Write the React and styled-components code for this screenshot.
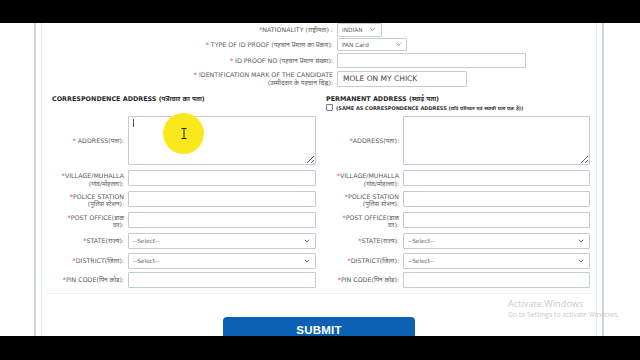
import React from 'react';
import styled, { createGlobalStyle } from 'styled-components';
import { ChevronDown } from 'lucide-react';

const Global = createGlobalStyle`
  html, body { margin: 0; padding: 0; background: #000; }
  #root { width: 640px; height: 360px; }
  * { box-sizing: border-box; }
`;

const FONT = `"DejaVu Sans", "Noto Sans", sans-serif`;

const Screen = styled.div`
  position: relative;
  width: 640px;
  height: 360px;
  display: flex;
  flex-direction: column;
  background: #000;
  overflow: hidden;
  font-family: ${FONT};
`;

const Letterbox = styled.div`
  flex: 0 0 ${(p) => p.$h}px;
  background: #000;
`;

const Viewport = styled.div`
  flex: 1;
  display: flex;
  background: #fff;
  padding-left: 34px;
  overflow: hidden;
`;

const Frame = styled.div`
  width: 570px;
  display: flex;
  padding: 0 5px;
  border-left: 2px solid #cdd6df;
  border-right: 2px solid #cdd6df;
`;

const Inner = styled.div`
  flex: 1;
  display: flex;
  flex-direction: column;
  border-left: 1px solid #e4e8ec;
  border-right: 1px solid #e4e8ec;
`;

const TopSection = styled.div`
  margin-top: -1px;
  display: flex;
  flex-direction: column;
`;

const TopRow = styled.div`
  height: ${(p) => p.$h}px;
  display: flex;
  align-items: center;
  gap: 4px;
`;

const TopLabelCell = styled.div`
  width: 291px;
  height: 100%;
  display: flex;
  justify-content: flex-end;
  align-items: center;
`;

const Label = styled.div`
  font-size: 6.3px;
  line-height: 7.5px;
  color: #5a5a5a;
  text-align: right;
  white-space: nowrap;
  align-self: ${(p) => (p.$top ? 'flex-start' : 'center')};
  padding-top: ${(p) => (p.$top ? 2 : 0)}px;
`;

const Star = styled.span`
  color: #e04848;
`;

const TextInput = styled.input`
  display: block;
  width: ${(p) => p.$w}px;
  height: ${(p) => p.$h || 15}px;
  border: 1px solid #c3ccd6;
  border-radius: 1px;
  background: #fff;
  padding: 0 5px;
  font-family: ${FONT};
  font-size: 7.5px;
  color: #444;
  outline: none;
`;

const SelectWrap = styled.div`
  position: relative;
  width: ${(p) => p.$w}px;
  height: ${(p) => p.$h || 15}px;
  color: #555;
  font-size: 0;
  line-height: 0;
  svg {
    position: absolute;
    right: ${(p) => p.$chev || 5}px;
    top: 0;
    bottom: 0;
    margin: auto 0;
    pointer-events: none;
  }
`;

const Select = styled.select`
  display: block;
  appearance: none;
  width: 100%;
  height: 100%;
  margin: 0;
  border: 1px solid #c3ccd6;
  border-radius: 1px;
  background: #fff;
  padding: 0 4px;
  font-family: ${FONT};
  font-size: 5.8px;
  color: #666;
  outline: none;
`;

const Columns = styled.div`
  margin-top: 2px;
  display: grid;
  grid-template-columns: 278px 276px;
`;

const Column = styled.div`
  display: flex;
  flex-direction: column;
`;

const ColHeader = styled.div`
  height: 26px;
  padding: 5px 0 0 ${(p) => p.$pad}px;
`;

const Title = styled.div`
  font-size: 6.4px;
  line-height: 8px;
  font-weight: bold;
  color: #2a2a2a;
  white-space: nowrap;
`;

const SameRow = styled.label`
  display: flex;
  align-items: center;
  gap: 3px;
  font-size: 5px;
  font-weight: bold;
  color: #333;
  white-space: nowrap;
  margin-top: 1px;
`;

const Box = styled.span`
  width: 7px;
  height: 7px;
  border: 1px solid #777;
  border-radius: 1px;
  background: #fff;
`;

const FieldList = styled.div`
  display: flex;
  flex-direction: column;
`;

const FieldRow = styled.div`
  display: grid;
  grid-template-columns: ${(p) => p.$label}px ${(p) => p.$field}px;
  column-gap: 4px;
  height: ${(p) => p.$h}px;
  margin-top: ${(p) => p.$mt}px;
`;

const AreaWrap = styled.div`
  position: relative;
`;

const Area = styled.textarea`
  display: block;
  width: 100%;
  height: 49px;
  margin: 0;
  border: 1px solid #c3ccd6;
  border-radius: 1px;
  resize: both;
  outline: none;
  background: #fff;
`;

const Caret = styled.span`
  position: absolute;
  left: 5px;
  top: 3px;
  width: 1px;
  height: 8px;
  background: #555;
`;

const Divider = styled.div`
  margin: 5px 3px 0;
  border-top: 1px solid #eef0f2;
`;

const SubmitBar = styled.div`
  display: flex;
  justify-content: center;
  margin-top: 23px;
`;

const SubmitButton = styled.button`
  width: 192px;
  height: 30px;
  border: none;
  border-radius: 4px 4px 0 0;
  background: #0d61b5;
  color: #fff;
  font-family: "Liberation Sans", Arial, sans-serif;
  font-weight: bold;
  font-size: 11.5px;
  padding: 0 0 4px;
  letter-spacing: 0.2px;
`;

const Highlight = styled.div`
  position: absolute;
  left: 163px;
  top: 113px;
  width: 41px;
  height: 41px;
  border-radius: 50%;
  background: radial-gradient(circle, #f8e81c 0%, #f8e81c 82%, rgba(248, 232, 28, 0.6) 92%, rgba(248, 232, 28, 0) 100%);
  display: flex;
  align-items: center;
  justify-content: center;
`;

const Watermark = styled.div`
  position: absolute;
  left: 508px;
  top: 298px;
  font-family: "Open Sans", "Noto Sans", sans-serif;
  color: #c9c9c9;
  pointer-events: none;
`;

const WmTitle = styled.div`
  font-size: 9.2px;
  line-height: 12px;
`;

const WmSub = styled.div`
  font-size: 6.8px;
  line-height: 9px;
`;

const leftRows = [
  { s: '* ', lines: ['ADDRESS(पता):'], type: 'area', mt: 0 },
  { s: '*', lines: ['VILLAGE/MUHALLA', '(गांव/मोहल्ला):'], mt: 5 },
  { s: '*', lines: ['POLICE STATION', '(पुलिस स्टेशन):'], mt: 5.4 },
  { s: '*', lines: ['POST OFFICE(डाक', 'घर):'], mt: 5.4 },
  { s: '*', lines: ['STATE(राज्य):'], type: 'select', mt: 5.4 },
  { s: '*', lines: ['DISTRICT(जिला):'], type: 'select', mt: 4.4 },
  { s: '*', lines: ['PIN CODE(पिन कोड):'], mt: 3.6 },
];

const rightRows = leftRows.map((r, i) => (i === 0 ? { ...r, s: '*' } : r));

function LabelText({ s, lines }) {
  return (
    <Label $top={lines.length > 1}>
      <Star>{s}</Star>
      {lines.map((l, i) => (
        <React.Fragment key={i}>
          {i > 0 && <br />}
          {l}
        </React.Fragment>
      ))}
    </Label>
  );
}

function AddressColumn({ pad, labelW, fieldW, rows, header, caret }) {
  return (
    <Column>
      <ColHeader $pad={pad}>{header}</ColHeader>
      <FieldList>
        {rows.map((r, i) => (
          <FieldRow
            key={i}
            $label={labelW}
            $field={fieldW}
            $h={r.type === 'area' ? 49 : 15.6}
            $mt={r.mt}
          >
            <LabelText s={r.s} lines={r.lines} />
            {r.type === 'area' ? (
              <AreaWrap>
                <Area />
                {caret && <Caret />}
              </AreaWrap>
            ) : r.type === 'select' ? (
              <SelectWrap $w={fieldW} $h={15.6}>
                <Select defaultValue="">
                  <option value="">--Select--</option>
                </Select>
                <ChevronDown size={8} strokeWidth={2.5} />
              </SelectWrap>
            ) : (
              <TextInput $w={fieldW} $h={15.6} />
            )}
          </FieldRow>
        ))}
      </FieldList>
    </Column>
  );
}

export default function App() {
  return (
    <Screen>
      <Global />
      <Letterbox $h={23} />
      <Viewport>
        <Frame>
          <Inner>
            <TopSection>
              <TopRow $h={15}>
                <TopLabelCell>
                  <Label><Star>*</Star>NATIONALITY (राष्ट्रीयता) :</Label>
                </TopLabelCell>
                <SelectWrap $w={45} $h={14} $chev={6}>
                  <Select defaultValue="IN">
                    <option value="IN">INDIAN</option>
                  </Select>
                  <ChevronDown size={7} strokeWidth={2.5} />
                </SelectWrap>
              </TopRow>
              <TopRow $h={15}>
                <TopLabelCell>
                  <Label><Star>* </Star>TYPE OF ID PROOF (पहचान प्रमाण का प्रकार):</Label>
                </TopLabelCell>
                <SelectWrap $w={70} $h={13} $chev={5}>
                  <Select defaultValue="PAN">
                    <option value="PAN">PAN Card</option>
                  </Select>
                  <ChevronDown size={7} strokeWidth={2.5} />
                </SelectWrap>
              </TopRow>
              <TopRow $h={17}>
                <TopLabelCell>
                  <Label><Star>* </Star>ID PROOF NO (पहचान प्रमाण संख्या):</Label>
                </TopLabelCell>
                <TextInput $w={189} $h={15} />
              </TopRow>
              <TopRow $h={19}>
                <TopLabelCell>
                  <Label>
                    <Star>* </Star>IDENTIFICATION MARK OF THE CANDIDATE
                    <br />
                    (उम्मीदवार के पहचान चिह्न):
                  </Label>
                </TopLabelCell>
                <TextInput $w={130} $h={16} defaultValue="MOLE ON MY CHICK" />
              </TopRow>
            </TopSection>

            <Columns>
              <AddressColumn
                pad={10}
                labelW={82}
                fieldW={188}
                rows={leftRows}
                caret
                header={<Title>CORRESPONDENCE ADDRESS (पत्राचार का पता)</Title>}
              />
              <AddressColumn
                pad={6}
                labelW={79}
                fieldW={187}
                rows={rightRows}
                header={
                  <>
                    <Title>PERMANENT ADDRESS (स्थाई पता)</Title>
                    <SameRow>
                      <Box />
                      (SAME AS CORRESPONDENCE ADDRESS (यदि पत्राचार एवं स्थायी पता एक है))
                    </SameRow>
                  </>
                }
              />
            </Columns>

            <Divider />
            <SubmitBar>
              <SubmitButton>SUBMIT</SubmitButton>
            </SubmitBar>
          </Inner>
        </Frame>
      </Viewport>
      <Letterbox $h={24} />

      <Highlight>
        <svg width="6" height="11" viewBox="0 0 6 11" fill="none" stroke="#222" strokeWidth="1">
          <path d="M0.5 0.5h5M0.5 10.5h5M3 0.5v10" />
        </svg>
      </Highlight>
      <Watermark>
        <WmTitle>Activate Windows</WmTitle>
        <WmSub>Go to Settings to activate Windows.</WmSub>
      </Watermark>
    </Screen>
  );
}
